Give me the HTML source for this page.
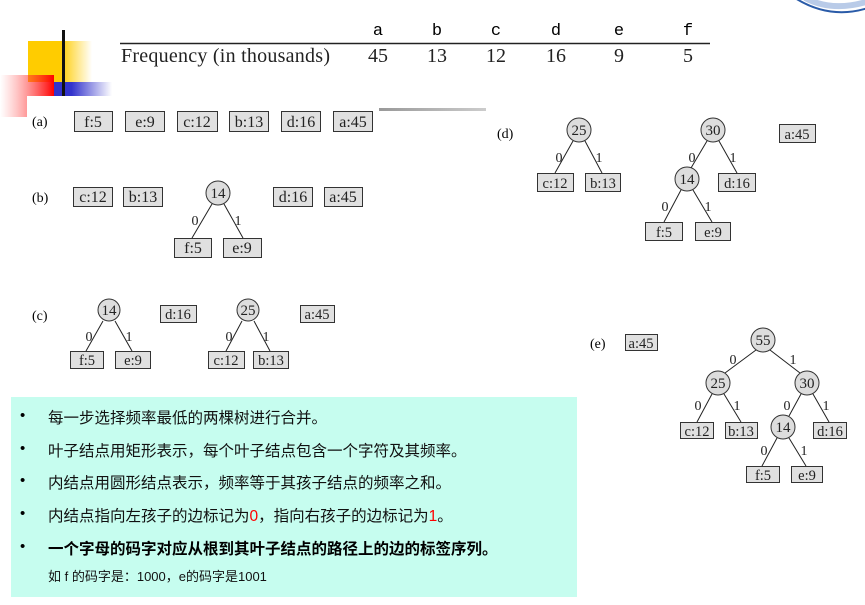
<!DOCTYPE html>
<html><head><meta charset="utf-8"><style>
body{margin:0;background:#fff;width:865px;height:605px;overflow:hidden;position:relative;font-family:"Liberation Sans","Noto Sans CJK SC",sans-serif}
.g{position:absolute;left:11px;top:397px;width:566px;height:200px;background:#c6fdef}
.l{position:absolute;left:48px;font-size:15.5px;color:#111;white-space:nowrap}
.b{position:absolute;left:20px;font-size:15px}
svg{position:absolute;left:0;top:0}
</style></head><body>
<div class="g"></div>
<div class="b" style="top:407px">•</div><div class="l" style="top:406px">每一步选择频率最低的两棵树进行合并。</div>
<div class="b" style="top:440px">•</div><div class="l" style="top:439px">叶子结点用矩形表示，每个叶子结点包含一个字符及其频率。</div>
<div class="b" style="top:472px">•</div><div class="l" style="top:471px">内结点用圆形结点表示，频率等于其孩子结点的频率之和。</div>
<div class="b" style="top:505px">•</div><div class="l" style="top:504px">内结点指向左孩子的边标记为<span style="color:#f00">0</span>，指向右孩子的边标记为<span style="color:#f00">1</span>。</div>
<div class="b" style="top:538px">•</div><div class="l" style="top:537px;font-weight:bold;color:#000">一个字母的码字对应从根到其叶子结点的路径上的边的标签序列。</div>
<div class="l" style="top:566px;font-size:13px">如 f 的码字是：1000，e的码字是1001</div>
<svg width="865" height="605" font-family="Liberation Serif,serif" font-size="15">
<defs>
<linearGradient id="gy" x1="0" x2="1"><stop offset="0.5" stop-color="#fc0"/><stop offset="1" stop-color="#fc0" stop-opacity="0"/></linearGradient>
<linearGradient id="gb" x1="0" x2="1"><stop offset="0.3" stop-color="#33c"/><stop offset="1" stop-color="#33c" stop-opacity="0"/></linearGradient>
<linearGradient id="gr" x1="1" x2="0"><stop offset="0" stop-color="#f00"/><stop offset="1" stop-color="#f66" stop-opacity="0"/></linearGradient>
<linearGradient id="gg" x1="0" x2="1"><stop offset="0" stop-color="#999"/><stop offset="1" stop-color="#ccc"/></linearGradient>
</defs>
<rect x="28" y="41" width="64" height="41" fill="url(#gy)"/>
<rect x="54" y="82" width="58" height="14" fill="url(#gb)"/>
<rect x="0" y="75" width="54" height="42" fill="url(#gr)"/>
<rect x="27" y="96" width="40" height="22" fill="#fff"/>
<rect x="62" y="30" width="3" height="66" fill="#111"/>
<rect x="379" y="108" width="107" height="3" fill="url(#gg)"/>
<path d="M795 -2 Q830 20 868 8" stroke="#2a5ba8" stroke-width="2" fill="none"/>
<path d="M805 -2 Q832 12 866 2" stroke="#8aa8d8" stroke-width="6" fill="none" opacity="0.6"/>
<g font-family="Liberation Mono,monospace" font-size="17" text-anchor="middle">
<text x="378" y="35">a</text><text x="437" y="35">b</text><text x="496" y="35">c</text><text x="556" y="35">d</text><text x="619" y="35">e</text><text x="688" y="35">f</text></g>
<line x1="120" y1="43.5" x2="710" y2="43.5" stroke="#222" stroke-width="1.5"/>
<g font-size="20" fill="#222"><text x="121" y="62" textLength="209">Frequency (in thousands)</text>
<g text-anchor="middle"><text x="378" y="62">45</text><text x="437" y="62">13</text><text x="496" y="62">12</text><text x="556" y="62">16</text><text x="619" y="62">9</text><text x="688" y="62">5</text></g></g>
<g font-size="14"><text x="32" y="126">(a)</text><text x="32" y="202">(b)</text><text x="32" y="320">(c)</text><text x="497" y="138">(d)</text><text x="590" y="348">(e)</text></g>
<g stroke="#222" stroke-width="1" fill="none">
<path d="M212 204L192 238M224 204L243 238"/>
<path d="M103 321L86 351M115 321L132 351M242 321L226 351M254 321L270 351"/>
<path d="M573 141L555 173M585 141L602 173M707 141L691 168M719 141L737 173M681 190L664 222M693 190L712 222"/>
<path d="M756 350L725 373M770 350L800 373M712 394L697 422M724 394L741 422M801 394L789 416M813 394L829 422M777 438L762 466M789 438L806 466"/>
</g>
<g font-size="14" fill="#222" text-anchor="middle">
<text x="195" y="225">0</text><text x="238" y="225">1</text>
<text x="89" y="341">0</text><text x="129" y="341">1</text><text x="229" y="341">0</text><text x="266" y="341">1</text>
<text x="559" y="162">0</text><text x="599" y="162">1</text><text x="692" y="162">0</text><text x="733" y="162">1</text><text x="665" y="211">0</text><text x="708" y="211">1</text>
<text x="733" y="364">0</text><text x="793" y="364">1</text><text x="698" y="410">0</text><text x="737" y="410">1</text><text x="787" y="410">0</text><text x="826" y="410">1</text><text x="764" y="455">0</text><text x="804" y="455">1</text>
</g>
<g fill="#ddd" stroke="#333" stroke-width="1">
<circle cx="218" cy="193" r="12"/><circle cx="109" cy="310" r="11"/><circle cx="248" cy="310" r="11"/>
<circle cx="579" cy="130" r="12"/><circle cx="713" cy="130" r="12"/><circle cx="687" cy="179" r="12"/>
<circle cx="763" cy="340" r="12"/><circle cx="718" cy="383" r="12"/><circle cx="807" cy="383" r="12"/><circle cx="783" cy="427" r="12"/>
</g>
<g font-size="15" fill="#222" text-anchor="middle">
<text x="218" y="198">14</text><text x="109" y="315">14</text><text x="248" y="315">25</text>
<text x="579" y="135">25</text><text x="713" y="135">30</text><text x="687" y="184">14</text>
<text x="763" y="345">55</text><text x="718" y="388">25</text><text x="807" y="388">30</text><text x="783" y="432">14</text>
</g>
<g fill="#e0e0e0" stroke="#333" stroke-width="1">
<rect x="74.5" y="111.5" width="38" height="20"/><rect x="125.5" y="111.5" width="39" height="20"/><rect x="177.5" y="111.5" width="40" height="20"/><rect x="229.5" y="111.5" width="39" height="20"/><rect x="281.5" y="111.5" width="39" height="20"/><rect x="333.5" y="111.5" width="39" height="20"/>
<rect x="73.5" y="187.5" width="39" height="19"/><rect x="123.5" y="187.5" width="39" height="19"/><rect x="273.5" y="187.5" width="39" height="19"/><rect x="324.5" y="187.5" width="38" height="19"/>
<rect x="174.5" y="238.5" width="37" height="19"/><rect x="223.5" y="238.5" width="38" height="19"/>
<rect x="70.5" y="351.5" width="33" height="17"/><rect x="115.5" y="351.5" width="35" height="17"/><rect x="160.5" y="305.5" width="36" height="17"/><rect x="208.5" y="351.5" width="36" height="17"/><rect x="253.5" y="351.5" width="35" height="17"/><rect x="300.5" y="305.5" width="34" height="17"/>
<rect x="537.5" y="173.5" width="36" height="18"/><rect x="585.5" y="173.5" width="35" height="18"/><rect x="718.5" y="173.5" width="37" height="18"/><rect x="645.5" y="222.5" width="37" height="18"/><rect x="695.5" y="222.5" width="35" height="18"/><rect x="779.5" y="124.5" width="36" height="18"/>
<rect x="625.5" y="334.5" width="32" height="16"/><rect x="680.5" y="422.5" width="33" height="16"/><rect x="725.5" y="422.5" width="32" height="16"/><rect x="813.5" y="422.5" width="33" height="16"/><rect x="746.5" y="466.5" width="33" height="16"/><rect x="791.5" y="466.5" width="31" height="16"/>
</g>
<g font-size="16" fill="#222" text-anchor="middle">
<text x="93" y="127">f:5</text><text x="145" y="127">e:9</text><text x="197" y="127">c:12</text><text x="249" y="127">b:13</text><text x="301" y="127">d:16</text><text x="353" y="127">a:45</text>
<text x="93" y="202">c:12</text><text x="143" y="202">b:13</text><text x="293" y="202">d:16</text><text x="343" y="202">a:45</text>
<text x="193" y="253">f:5</text><text x="242" y="253">e:9</text>
</g>
<g font-size="14.5" fill="#222" text-anchor="middle">
<text x="87" y="365">f:5</text><text x="133" y="365">e:9</text><text x="178" y="319">d:16</text><text x="226" y="365">c:12</text><text x="271" y="365">b:13</text><text x="317" y="319">a:45</text>
<text x="555" y="188">c:12</text><text x="603" y="188">b:13</text><text x="737" y="188">d:16</text><text x="664" y="237">f:5</text><text x="713" y="237">e:9</text><text x="797" y="139">a:45</text>
<text x="641" y="348">a:45</text><text x="697" y="436">c:12</text><text x="741" y="436">b:13</text><text x="830" y="436">d:16</text><text x="763" y="480">f:5</text><text x="807" y="480">e:9</text>
</g>
</svg>
</body></html>
